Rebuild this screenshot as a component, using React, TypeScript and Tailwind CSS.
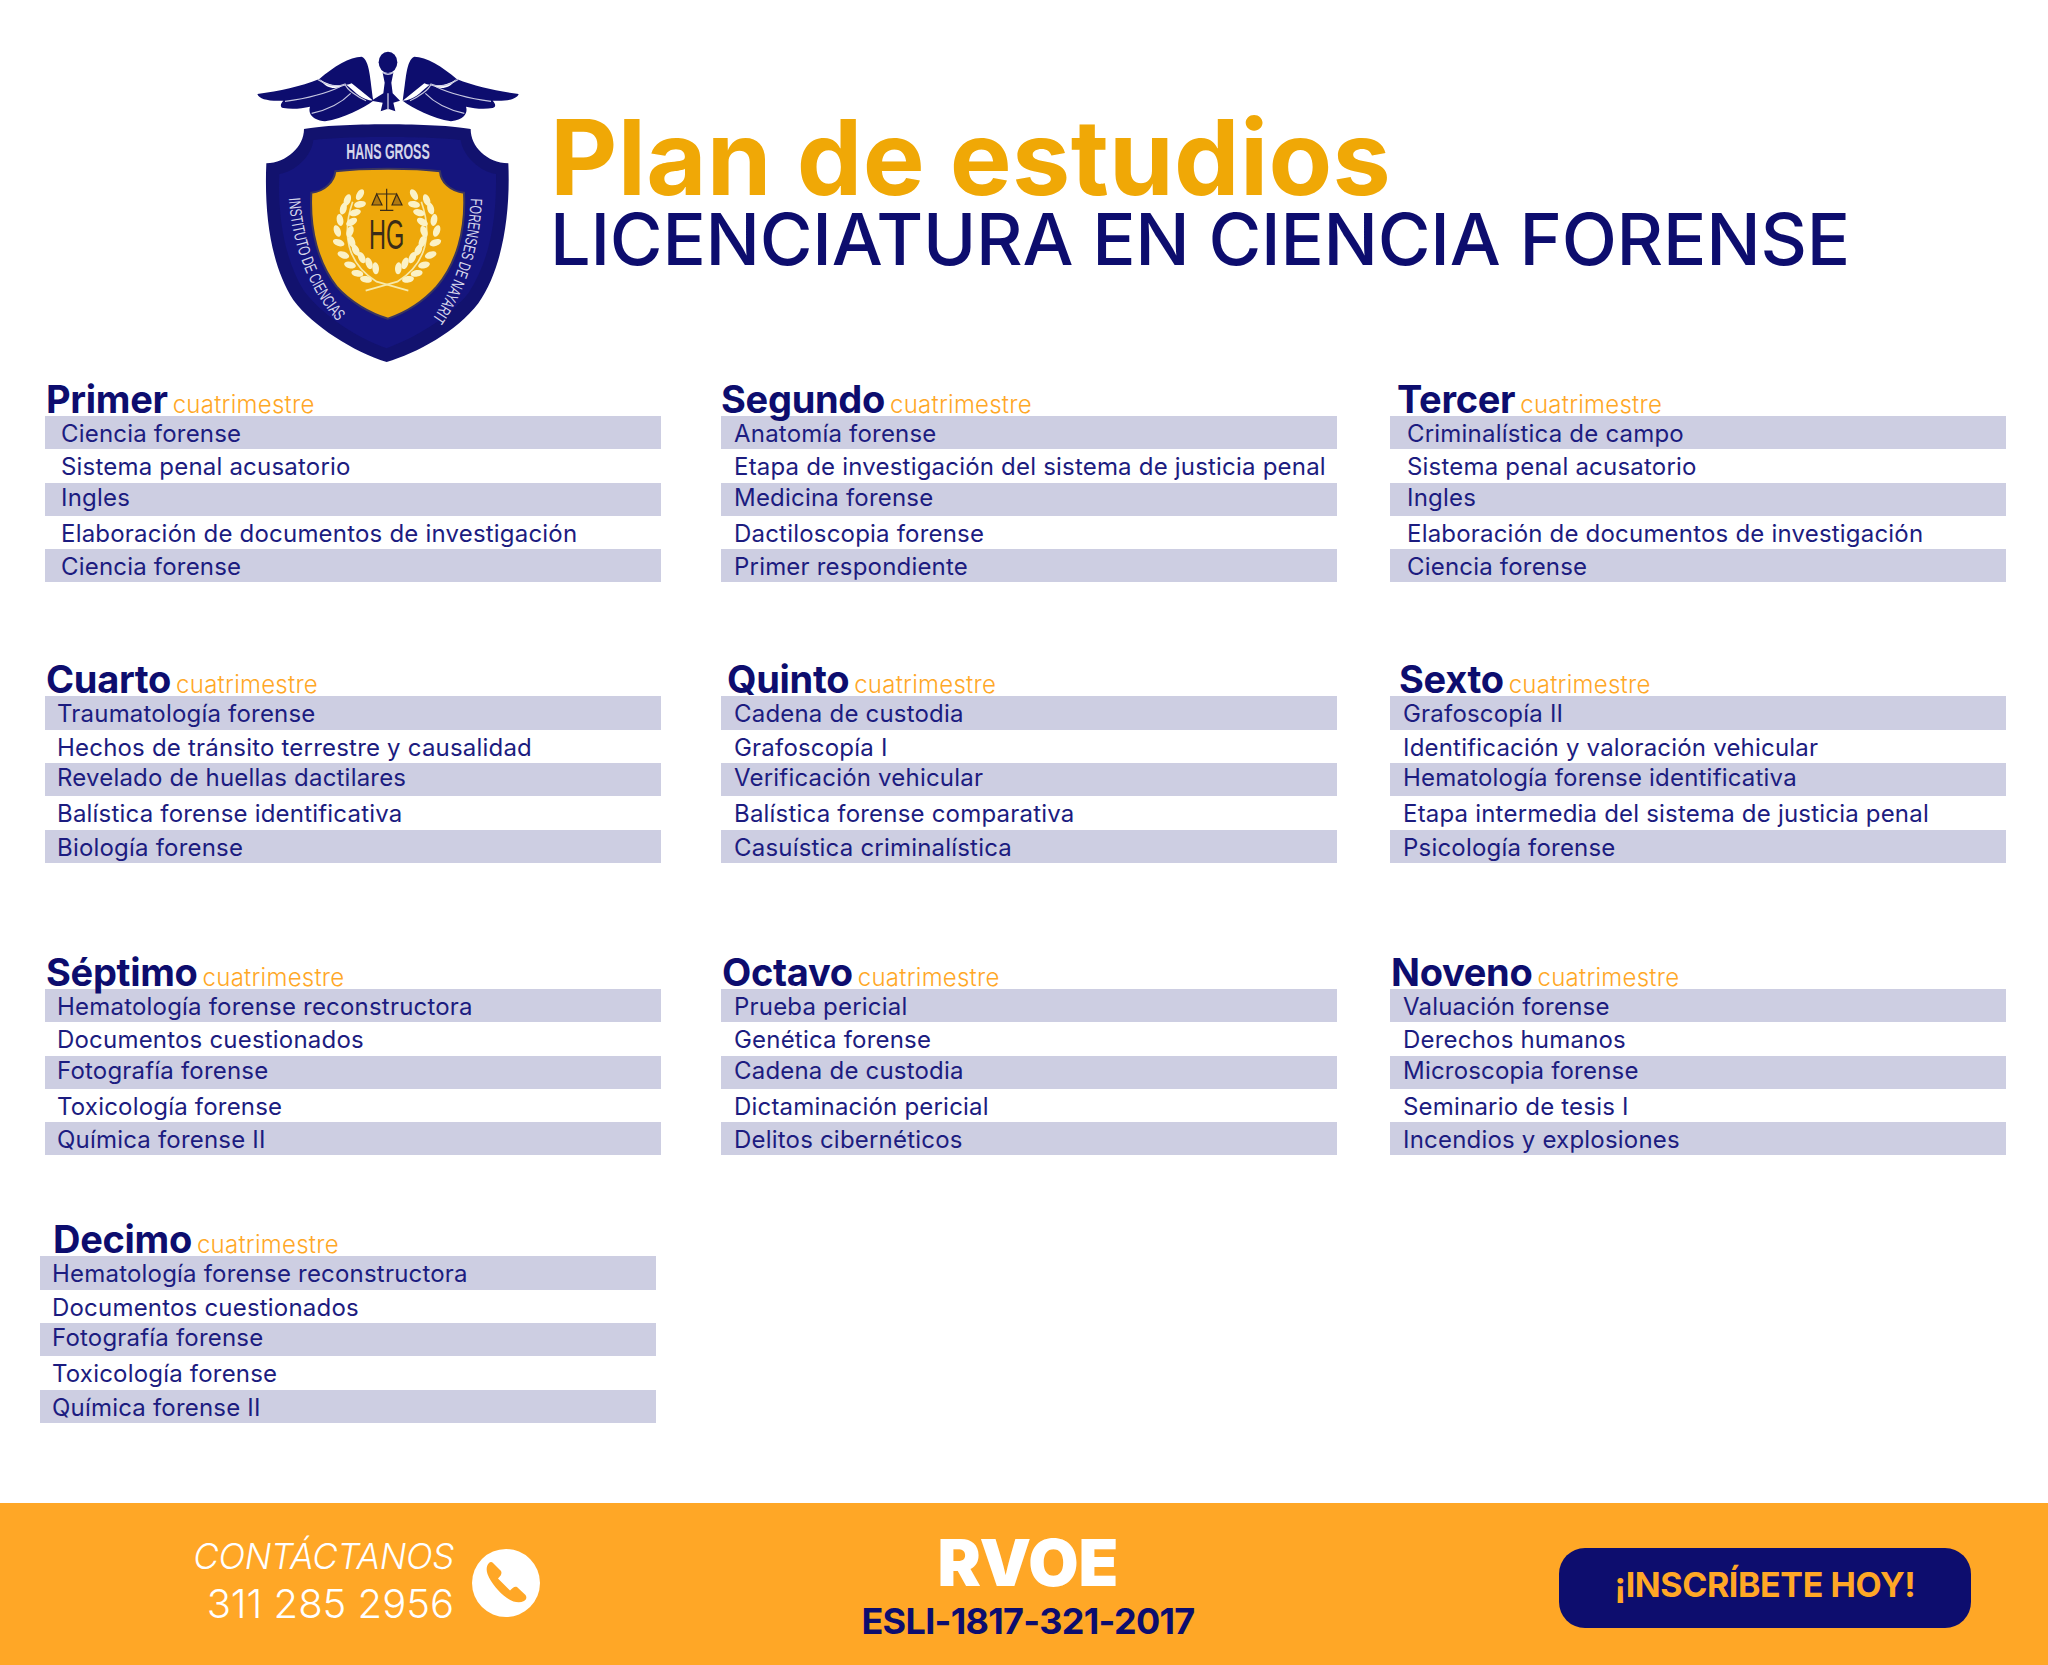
const navy = "#0d0d6e"

type Term = { name: string; labelPad: string; rowPad: string; items: string[] }

const ROW_A = [
  { name: "Primer", labelPad: "pl-[1px]", rowPad: "pl-[16px]", items: ["Ciencia forense", "Sistema penal acusatorio", "Ingles", "Elaboración de documentos de investigación", "Ciencia forense"] },
  { name: "Segundo", labelPad: "pl-0", rowPad: "pl-[13px]", items: ["Anatomía forense", "Etapa de investigación del sistema de justicia penal", "Medicina forense", "Dactiloscopia forense", "Primer respondiente"] },
  { name: "Tercer", labelPad: "pl-[7px]", rowPad: "pl-[17px]", items: ["Criminalística de campo", "Sistema penal acusatorio", "Ingles", "Elaboración de documentos de investigación", "Ciencia forense"] },
]
const ROW_B = [
  { name: "Cuarto", labelPad: "pl-[1px]", rowPad: "pl-[12px]", items: ["Traumatología forense", "Hechos de tránsito terrestre y causalidad", "Revelado de huellas dactilares", "Balística forense identificativa", "Biología forense"] },
  { name: "Quinto", labelPad: "pl-[6px]", rowPad: "pl-[13px]", items: ["Cadena de custodia", "Grafoscopía I", "Verificación vehicular", "Balística forense comparativa", "Casuística criminalística"] },
  { name: "Sexto", labelPad: "pl-[9px]", rowPad: "pl-[13px]", items: ["Grafoscopía II", "Identificación y valoración vehicular", "Hematología forense identificativa", "Etapa intermedia del sistema de justicia penal", "Psicología forense"] },
]
const ROW_C = [
  { name: "Séptimo", labelPad: "pl-[1px]", rowPad: "pl-[12px]", items: ["Hematología forense reconstructora", "Documentos cuestionados", "Fotografía forense", "Toxicología forense", "Química forense II"] },
  { name: "Octavo", labelPad: "pl-[1px]", rowPad: "pl-[13px]", items: ["Prueba pericial", "Genética forense", "Cadena de custodia", "Dictaminación pericial", "Delitos cibernéticos"] },
  { name: "Noveno", labelPad: "pl-[1px]", rowPad: "pl-[13px]", items: ["Valuación forense", "Derechos humanos", "Microscopia forense", "Seminario de tesis I", "Incendios y explosiones"] },
]
const DECIMO = { name: "Decimo", labelPad: "pl-[13px]", rowPad: "pl-[12px]", items: ["Hematología forense reconstructora", "Documentos cuestionados", "Fotografía forense", "Toxicología forense", "Química forense II"] }

// the source artwork doesn't centre its rows evenly, the third one sits high
const ROW_LEADING = ["leading-[35px]", "leading-[36px]", "leading-[29px]", "leading-[35px]", "leading-[35px]"]

function TermBlock({ term }: { term: Term }) {
  return (
    <div className="w-[616px]">
      <div className={`flex items-baseline gap-[5px] h-[39px] pt-[3px] ${term.labelPad}`}>
        <span className="text-[38px] leading-[39px] font-bold tracking-[-0.3px] text-[#0d0d6e]">{term.name}</span>
        <span className="text-[24px] leading-[39px] font-light tracking-[0.25px] text-[#ffa726]">cuatrimestre</span>
      </div>
      {term.items.map((item, i) => (
        <div
          key={i}
          className={`h-[33.3px] ${term.rowPad} text-[24px] tracking-[0.2px] text-[#1c1c80] ${ROW_LEADING[i]} ${i % 2 === 0 ? "bg-[#cdcee2]" : ""}`}
        >
          {item}
        </div>
      ))}
    </div>
  )
}

function TermRow({ terms, className }: { terms: Term[]; className: string }) {
  return (
    <div className={`flex ${className}`}>
      <TermBlock term={terms[0]} />
      <div className="ml-[60px]"><TermBlock term={terms[1]} /></div>
      <div className="ml-[53px]"><TermBlock term={terms[2]} /></div>
    </div>
  )
}

function Logo() {
  const leaves = [
    [390, 494, 30], [352, 510, 20], [390, 523, 80], [340, 536, 15], [375, 548, 75], [330, 570, -10], [365, 576, 60],
    [322, 603, -20], [360, 605, 20], [326, 638, -70], [365, 635, -20], [340, 675, -70], [377, 660, -25], [360, 705, -75],
    [395, 683, -25], [382, 730, -80], [417, 700, -20], [408, 748, -80], [437, 715, -5],
  ]
  return (
    <svg viewBox="0 0 960 1050" className="w-[320px] h-[350px] shrink-0">
      {/* wings */}
      <path d="M430 212 C395 210 380 190 350 165 C330 170 300 190 268 147 C210 170 150 183 82 192 C88 208 115 214 160 212 C150 222 150 232 160 234 C185 238 215 236 240 230 C235 245 240 268 285 274 C340 265 400 235 430 212Z" fill={navy} />
      <path d="M430 212 C420 150 420 90 395 80 C360 80 310 110 268 147 C300 170 340 170 365 160 L430 212Z" fill={navy} />
      <path d="M518 212 C553 210 568 190 598 165 C618 170 648 190 680 147 C738 170 798 183 866 192 C860 208 833 214 788 212 C798 222 798 232 788 234 C763 238 733 236 708 230 C713 245 708 268 663 274 C608 265 548 235 518 212Z" fill={navy} />
      <path d="M518 212 C528 150 528 90 553 80 C588 80 638 110 680 147 C648 170 608 170 583 160 L518 212Z" fill={navy} />
      <g fill="none" stroke="#c6c7e0" strokeWidth="3.5">
        <path d="M165 214 C230 205 285 192 330 170 M245 250 C290 240 335 218 362 190" />
        <path d="M262 148 C285 162 310 176 345 162 C350 178 380 200 408 212" />
        <path d="M783 214 C718 205 663 192 618 170 M703 250 C658 240 613 218 586 190" />
        <path d="M686 148 C663 162 638 176 603 162 C598 178 568 200 540 212" />
      </g>
      {/* staff */}
      <ellipse cx="474" cy="97" rx="28" ry="32" fill={navy} />
      <path d="M458 128 H490 L484 158 L488 190 L510 212 L490 218 L496 244 L474 236 L452 244 L458 218 L424 212 L460 190 L464 158Z" fill={navy} />
      <path d="M458 127 C468 134 480 134 490 127 M474 190 V240" stroke="#c6c7e0" strokeWidth="4" fill="none" />
      {/* shield */}
      <path d="M222 297 C320 278 620 278 722 297 C722 350 770 398 835 400 C842 560 815 720 745 820 C680 905 560 970 470 996 C370 965 250 890 190 810 C125 710 102 560 109 400 C170 398 222 350 222 297Z" fill="#12126e" />
      <path d="M250 330 C340 318 600 318 692 330 C700 380 750 425 798 432 C800 570 780 690 715 790 C650 870 550 925 470 955 C385 925 280 860 220 780 C165 690 142 560 148 432 C195 425 245 380 250 330Z" fill="#15157e" />
      <path d="M316 424 C400 414 550 414 630 424 C632 455 660 484 702 488 C708 600 680 700 620 770 C575 820 520 850 474 866 C420 850 360 815 320 770 C265 700 238 600 244 488 C285 484 312 455 316 424Z" fill="#eea80b" stroke="#3a3560" strokeWidth="6" />
      {/* wreath */}
      <g fill="none" stroke="#f7e9a8" strokeWidth="5">
        <path d="M368 515 C335 610 350 700 440 755 L535 782" />
        <path d="M574 515 C607 610 592 700 502 755 L407 782" />
      </g>
      <g fill="#fbf2c6">
        {leaves.map(([x, y, r], i) => (
          <g key={i}>
            <ellipse cx={x} cy={y} rx="10" ry="18" transform={`rotate(${r} ${x} ${y})`} />
            <ellipse cx={942 - x} cy={y} rx="10" ry="18" transform={`rotate(${-r} ${942 - x} ${y})`} />
          </g>
        ))}
      </g>
      {/* balance */}
      <g fill="none" stroke="#3b2c16" strokeWidth="3.5">
        <path d="M470 476 V540 M450 541 H490 M440 492 H500" />
        <path d="M440 492 L426 525 H456Z M500 492 L486 525 H516Z" fill="#b07a10" />
      </g>
      <text x="470" y="658" textAnchor="middle" fontFamily="'Liberation Sans',sans-serif" fontSize="128" fill="#3a2c18" textLength="106" lengthAdjust="spacingAndGlyphs">HG</text>
      {/* band lettering */}
      <text x="474" y="388" textAnchor="middle" fontFamily="'Liberation Sans',sans-serif" fontSize="66" fontWeight="700" fill="#d5d6ea" textLength="250" lengthAdjust="spacingAndGlyphs">HANS GROSS</text>
      <path id="bandLeft" d="M176 505 C186 640 230 770 320 872" fill="none" />
      <path id="bandRight" d="M722 505 C716 640 680 760 610 862" fill="none" />
      <text fontFamily="'Liberation Sans',sans-serif" fontSize="50" fill="#d5d6ea">
        <textPath href="#bandLeft" textLength="405" lengthAdjust="spacingAndGlyphs">INSTITUTO DE CIENCIAS</textPath>
      </text>
      <text fontFamily="'Liberation Sans',sans-serif" fontSize="50" fill="#d5d6ea">
        <textPath href="#bandRight" textLength="385" lengthAdjust="spacingAndGlyphs">FORENSES DE NAYARIT</textPath>
      </text>
    </svg>
  )
}

export default function App() {
  return (
    <main className="w-[2048px] h-[1665px] bg-white flex flex-col font-['Inter','Liberation_Sans',sans-serif]">
      {/* Header */}
      <header className="h-[377px] flex pt-[30px] pl-[230px]">
        <Logo />
        <div className="pt-[75px]">
          <h1 className="text-[104px] leading-[104px] font-bold tracking-[0.3px] text-[#f0a806]">Plan de estudios</h1>
          <h2 className="text-[72px] leading-[60px] font-medium tracking-[-0.25px] text-[#0d0d6e]">LICENCIATURA EN CIENCIA FORENSE</h2>
        </div>
      </header>

      {/* Terms */}
      <section className="flex-1 pl-[45px] flex flex-col">
        <TermRow terms={ROW_A} className="" />
        <TermRow terms={ROW_B} className="mt-[75px]" />
        <TermRow terms={ROW_C} className="mt-[87px]" />
        <div className="flex mt-[62px] -ml-[5px]"><TermBlock term={DECIMO} /></div>
      </section>

      {/* Footer */}
      <footer className="h-[162px] bg-[#ffa726] flex">
        <div className="w-[454px] pt-[31px] text-right text-white">
          <div className="text-[35px] leading-[44px] font-light italic tracking-[-0.3px]">CONTÁCTANOS</div>
          <div className="text-[40px] leading-[52px] font-light">311 285 2956</div>
        </div>
        <div className="ml-[18px] mt-[46px] w-[68px] h-[68px] rounded-full bg-white">
          <svg viewBox="0 0 68 68" className="w-[68px] h-[68px]" fill="#ffa726">
            <path d="M17 14 C18 12.5 20 12.5 21 14 L29 22 C30 24 29.5 26.5 26 29.5 L38 41.5 C41 38 43 37 45 38 L53.5 46 C55 48 54.5 50.5 52 52 C47 54.5 41 53 35 49 C27 43.5 19 34 15.5 25 C14 20.5 14.5 16.5 17 14Z" />
          </svg>
        </div>
        <div className="ml-[155px] w-[666px] pt-[27px] text-center">
          <div className="text-[65px] leading-[66px] font-black text-white">RVOE</div>
          <div className="mt-[3px] text-[36px] leading-[44px] font-bold tracking-[-0.7px] text-[#0d0d6e]">ESLI-1817-321-2017</div>
        </div>
        <div className="ml-[198px] mt-[45px] w-[412px] h-[80px] rounded-[26px] bg-[#0d0d6e] flex items-center justify-center pb-[7px]">
          <span className="text-[34px] font-bold tracking-[-0.4px] text-[#ffa726]">¡INSCRÍBETE HOY!</span>
        </div>
      </footer>
    </main>
  )
}
